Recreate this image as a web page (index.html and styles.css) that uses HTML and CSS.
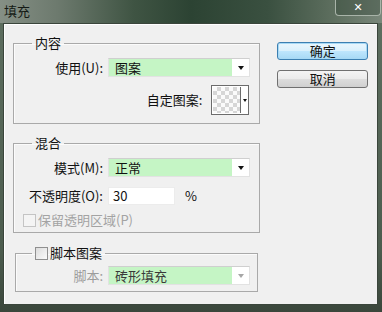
FILE: index.html
```html
<!DOCTYPE html>
<html lang="zh-CN">
<head>
  <meta charset="UTF-8">
  <title>填充</title>
  <link rel="stylesheet" href="styles.css">
</head>
<body>
  <div class="window">
    <!-- заголовок окна -->
    <div class="titlebar">
      <span class="title">填充</span>
      <span class="close">✕</span>
    </div>
    <div class="client">
      <div class="groups">
        <fieldset class="group">
          <legend>内容</legend>
          <div class="field">
            <label>使用(U):</label>
            <div class="combo"><span class="combo-value">图案</span><i class="combo-btn"><b class="arrow"></b></i></div>
          </div>
          <div class="field-right">
            <label>自定图案:</label>
            <div class="swatch"><span class="checker"></span><i class="swatch-btn"><b class="arrow"></b></i></div>
          </div>
        </fieldset>

        <fieldset class="group group-blend">
          <legend>混合</legend>
          <div class="field">
            <label>模式(M):</label>
            <div class="combo"><span class="combo-value">正常</span><i class="combo-btn"><b class="arrow"></b></i></div>
          </div>
          <div class="field field-opacity">
            <label>不透明度(O):</label>
            <div class="opacity"><span class="input">30</span><span class="unit">%</span></div>
          </div>
          <div class="check disabled"><span class="box"></span>保留透明区域(P)</div>
        </fieldset>

        <fieldset class="group group-script">
          <legend><span class="check"><span class="box"></span>脚本图案</span></legend>
          <div class="field field-script">
            <label class="muted">脚本:</label>
            <div class="combo combo-disabled"><span class="combo-value">砖形填充</span><i class="combo-btn"><b class="arrow"></b></i></div>
          </div>
        </fieldset>
      </div>

      <div class="buttons">
        <button class="btn btn-default">确定</button>
        <button class="btn">取消</button>
      </div>
    </div>
  </div>
</body>
</html>
```

FILE: styles.css
```css
html, body {
  margin: 0;
  padding: 0;
  width: 382px;
  height: 312px;
  overflow: hidden;
  font-family: "Noto Sans CJK SC", "Liberation Sans", sans-serif;
  font-size: 13px;
  line-height: 16px;
  color: #111;
}
/* рамка окна */
.window {
  width: 382px;
  height: 312px;
  display: flex;
  flex-direction: column;
  background: linear-gradient(to bottom, #5e6f60, #4c5c4e 80%, #3a463b);
}
.titlebar {
  height: 23px;
  display: flex;
  align-items: flex-start;
  padding: 0 1px 0 4px;
  box-sizing: border-box;
  background: linear-gradient(to right, #858f85 0%, #6d7a6e 15%, #3f5443 35%, #2c4333 50%, #3a5040 70%, #5f7060 88%, #7a887b 100%);
}
.title {
  margin-top: 3px;
  color: #151a15;
  font-size: 13px;
}
.close {
  margin-left: auto;
  width: 46px;
  height: 16px;
  box-sizing: border-box;
  border: 1px solid #a9b4a9;
  border-top: none;
  border-radius: 0 0 4px 4px;
  background: rgba(40, 60, 45, 0.35);
  color: #fff;
  font-family: "DejaVu Sans", sans-serif;
  font-size: 11px;
  font-weight: bold;
  line-height: 15px;
  text-align: center;
}
.client {
  margin: 0 4px 0 3px;
  height: 282px;
  box-sizing: border-box;
  border: 1px solid #3a453b;
  box-shadow: inset 1px 1px 0 #fff;
  background: #f0f0f0;
  padding: 11px 9px 0 9px;
  display: flex;
  gap: 17px;
}
.groups {
  width: 248px;
  display: flex;
  flex-direction: column;
}
/* группы */
.group {
  margin: 0;
  padding: 7px 0 8px 0;
  border: 1px solid #a9a9a9;
  box-shadow: inset 1px 1px 0 #fbfbfb;
  min-inline-size: 0;
}
.group legend {
  padding: 0 3px;
  margin-left: 18px;
  line-height: 16px;
}
.group-blend {
  margin-top: 11px;
  padding-bottom: 4px;
}
.group-script {
  margin: 12px 2px 0;
  padding: 5px 0 6px 0;
}
.group-script legend {
  margin-left: 16px;
}
.field {
  display: grid;
  grid-template-columns: 89px 142px;
  column-gap: 5px;
  align-items: center;
}
.field label {
  text-align: right;
}
.field-opacity {
  margin-top: 10px;
}
.field-script {
  grid-template-columns: 87px 142px;
}
.muted {
  color: #9c9c9c;
}
.field-right {
  margin-top: 8px;
  display: flex;
  justify-content: flex-end;
  align-items: center;
  gap: 9px;
  padding-right: 10px;
}
/* выпадающий список */
.combo {
  height: 19px;
  display: flex;
  box-sizing: border-box;
  border: 1px solid #e2e2e2;
  border-top-color: #cfcfcf;
  background: #fff;
}
.combo-value {
  flex: 1;
  background: #c5f5c5;
  padding-left: 6px;
  line-height: 17px;
}
.combo-btn {
  width: 17px;
  display: flex;
  align-items: center;
  justify-content: center;
}
.arrow {
  width: 0;
  height: 0;
  border-style: solid;
  border-width: 4px 3px 0 3px;
  border-color: #111 transparent transparent transparent;
}
.combo-disabled .combo-value {
  color: #3a3a3a;
}
.combo-disabled .arrow {
  border-top-color: #a6a6a6;
}
/* образец узора */
.swatch {
  width: 38px;
  height: 30px;
  box-sizing: border-box;
  border: 1px solid #6c6c6c;
  display: flex;
  background: #fff;
}
.checker {
  width: 27px;
  border-right: 1px solid #6c6c6c;
  background-color: #fafafa;
  background-image:
    linear-gradient(45deg, #d6d6d6 25%, transparent 25%, transparent 75%, #d6d6d6 75%),
    linear-gradient(45deg, #d6d6d6 25%, transparent 25%, transparent 75%, #d6d6d6 75%);
  background-size: 8px 8px;
  background-position: 0 0, 4px 4px;
  margin: 1px 0 1px 1px;
}
.swatch-btn {
  flex: 1;
  display: flex;
  align-items: center;
  justify-content: center;
}
.swatch-btn .arrow {
  border-width: 3px 2.5px 0 2.5px;
}
.opacity {
  display: flex;
  align-items: center;
}
.input {
  width: 67px;
  height: 18px;
  box-sizing: border-box;
  background: #fff;
  border: 1px solid #ececec;
  padding-left: 4px;
  line-height: 16px;
}
.unit {
  margin-left: 10px;
}
/* флажки */
.check {
  display: flex;
  align-items: center;
  gap: 2px;
}
.check .box {
  width: 13px;
  height: 13px;
  box-sizing: border-box;
  border: 1px solid #8f8f8f;
  background: linear-gradient(135deg, #dcdcdc, #fafafa);
}
.group-blend .check {
  margin-top: 7px;
  padding-left: 9px;
}
.check.disabled {
  color: #a3a3a3;
}
.check.disabled .box {
  border-color: #c4c4c4;
  background: #f4f4f4;
}
/* кнопки */
.buttons {
  width: 91px;
  padding-top: 7px;
  display: flex;
  flex-direction: column;
  gap: 10px;
}
.btn {
  height: 18px;
  padding: 0;
  box-sizing: border-box;
  border: 1px solid #707070;
  border-radius: 3px;
  background: linear-gradient(to bottom, #f4f4f4 0%, #ebebeb 50%, #dddddd 51%, #d0d0d0 100%);
  font-family: inherit;
  font-size: 13px;
  line-height: 14px;
  color: #111;
}
.btn-default {
  border-color: #3c7fb1;
  box-shadow: inset 0 0 0 1px #a7d9f5;
  background: linear-gradient(to bottom, #eaf6fd 0%, #d9f0fc 50%, #bee6fd 51%, #a7d9f5 100%);
}
```
